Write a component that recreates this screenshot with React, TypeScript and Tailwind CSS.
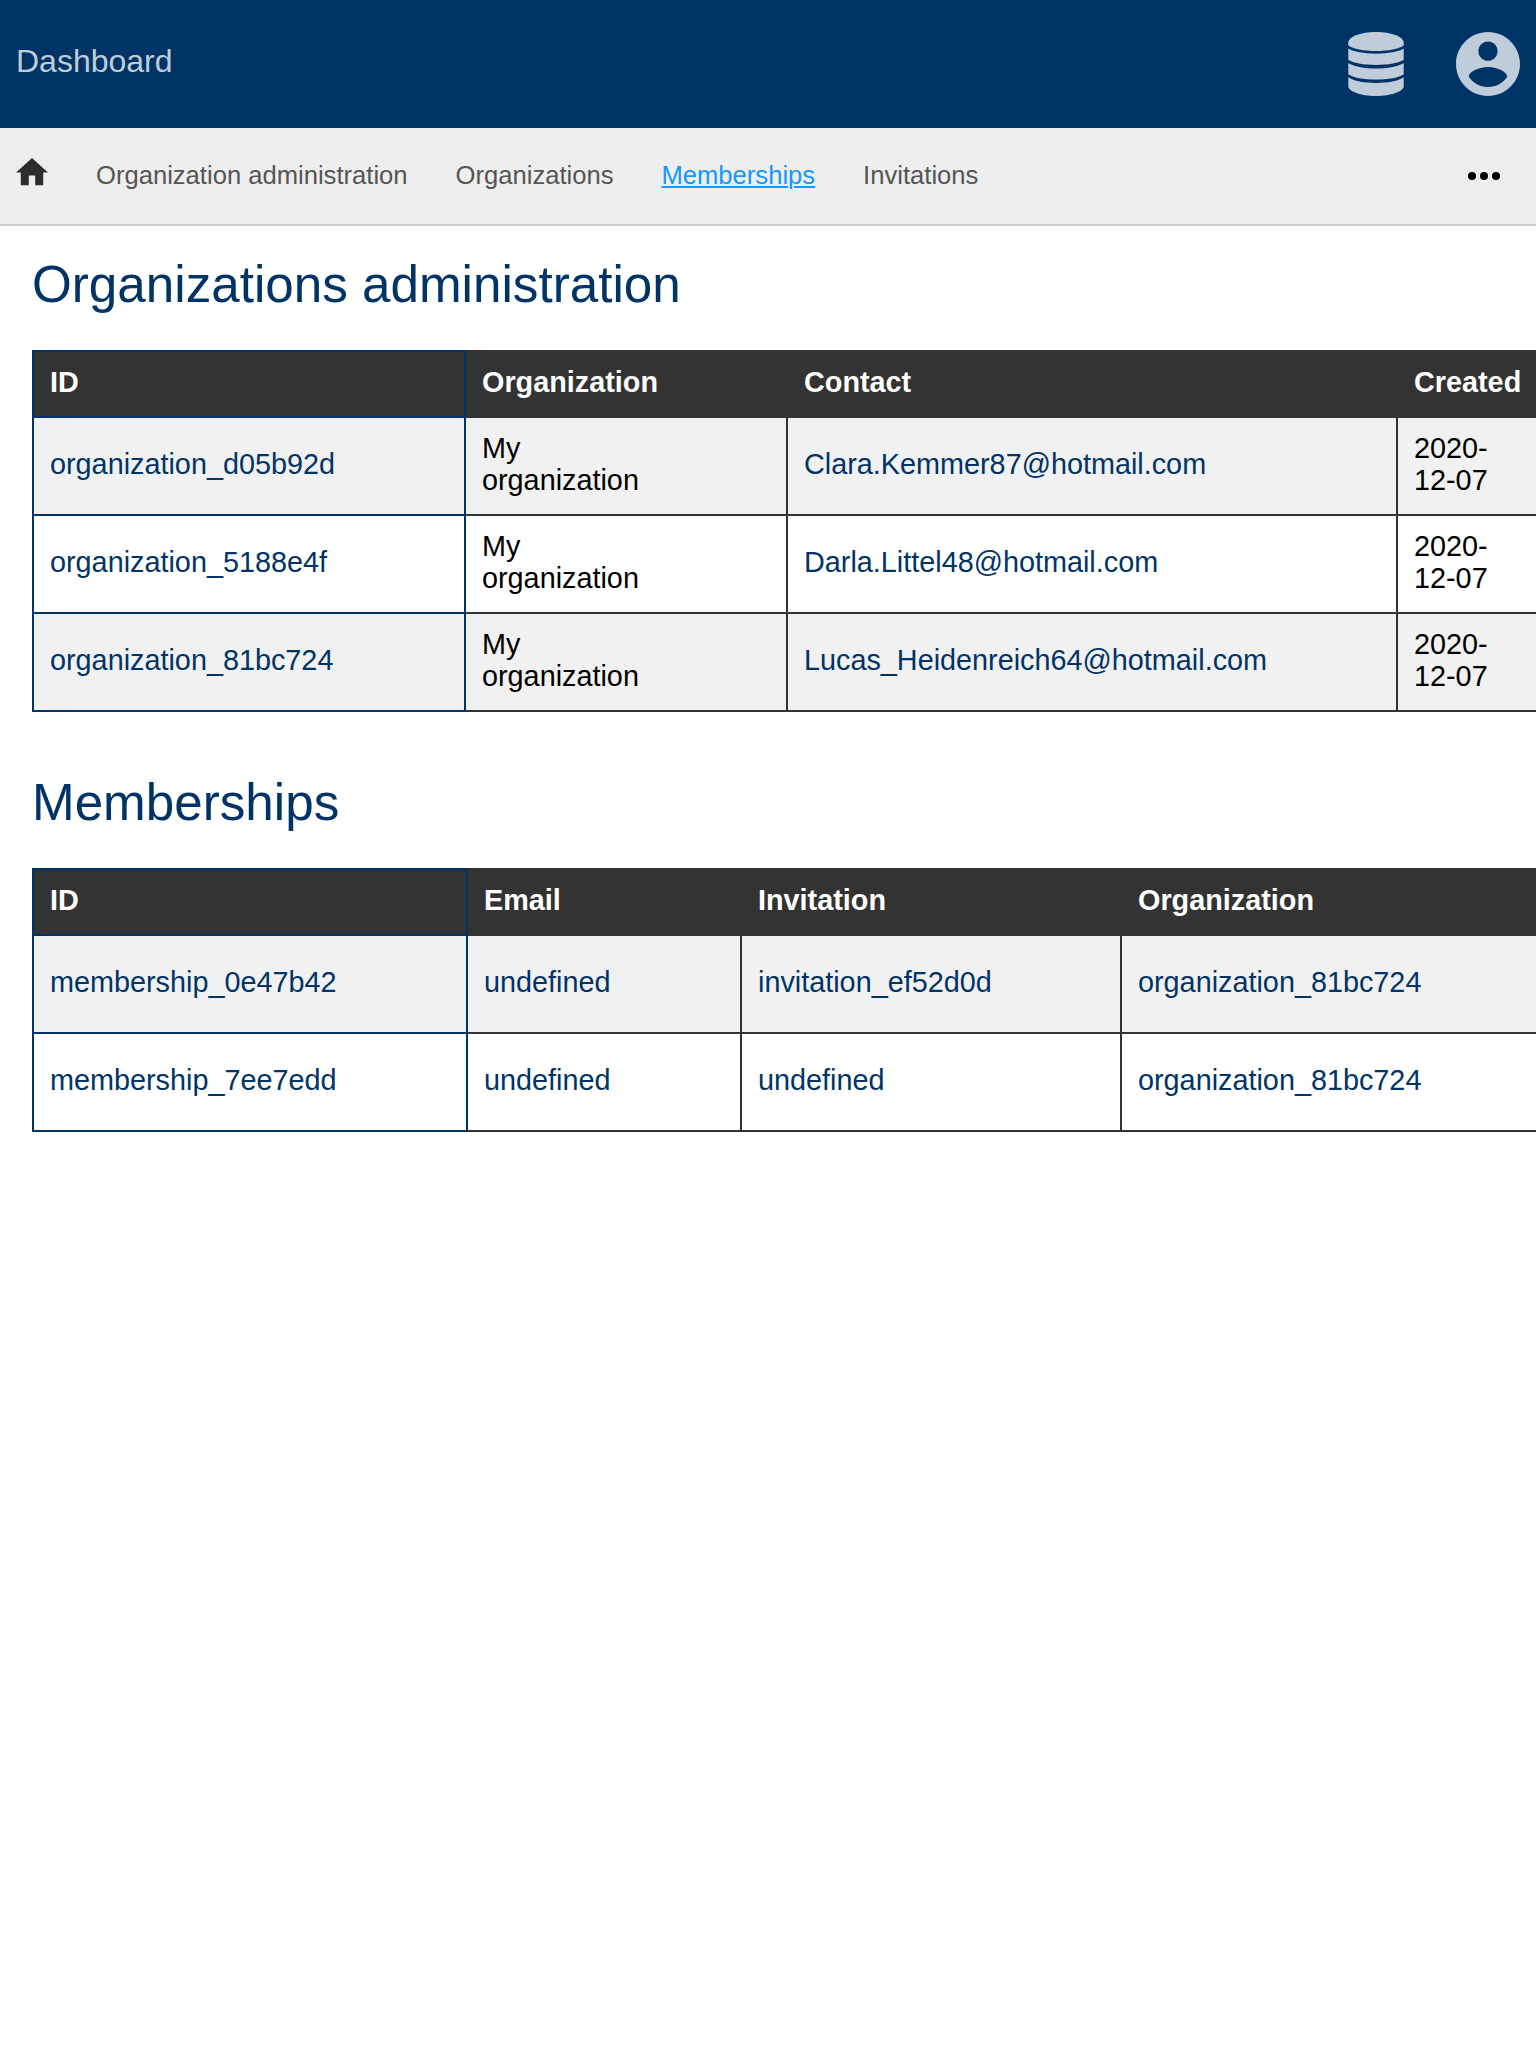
import type { ReactNode } from "react";

type Column = { label: string; width: string };
type Cell = { text: ReactNode; link?: boolean };

const organizationColumns: Column[] = [
  { label: "ID", width: "w-[432px]" },
  { label: "Organization", width: "w-[322px]" },
  { label: "Contact", width: "w-[610px]" },
  { label: "Created", width: "w-[180px]" },
];

const myOrganization = (
  <>
    My
    <br />
    organization
  </>
);
const created = (
  <>
    2020-
    <br />
    12-07
  </>
);

const organizationRows: Cell[][] = [
  ["organization_d05b92d", "Clara.Kemmer87@hotmail.com"],
  ["organization_5188e4f", "Darla.Littel48@hotmail.com"],
  ["organization_81bc724", "Lucas_Heidenreich64@hotmail.com"],
].map(([id, contact]) => [
  { text: id, link: true },
  { text: myOrganization },
  { text: contact, link: true },
  { text: created },
]);

const membershipColumns: Column[] = [
  { label: "ID", width: "w-[434px]" },
  { label: "Email", width: "w-[274px]" },
  { label: "Invitation", width: "w-[380px]" },
  { label: "Organization", width: "w-[460px]" },
];

const membershipRows: Cell[][] = [
  ["membership_0e47b42", "undefined", "invitation_ef52d0d", "organization_81bc724"],
  ["membership_7ee7edd", "undefined", "undefined", "organization_81bc724"],
].map((row) => row.map((text) => ({ text, link: true })));

function DatabaseIcon() {
  return (
    <svg viewBox="0 0 56 64" className="h-16 w-14" fill="currentColor">
      <path d="M28 0C43.200 0 55.700 4.700 55.700 10.600V13.400C51 16.700 40.500 18.900 28 18.900S5 16.700 .3 13.400V10.600C.3 4.700 12.800 0 28 0Z" />
      <path d="M.3 16.600C5.500 19.800 16 21.700 28 21.700S50.500 19.800 55.700 16.600V27.700C51 30.900 40.500 32.900 28 32.900S5 30.900 .3 27.700Z" />
      <path d="M.3 31C5.500 34.500 16 36.500 28 36.500S50.500 34.500 55.700 31V42.200C51 45.500 40.500 47.500 28 47.500S5 45.500 .3 42.200Z" />
      <path d="M.3 45.300C5.500 49 16 51 28 51S50.500 49 55.700 45.300V54C55.700 59.500 43.200 64 28 64S.3 59.500 .3 54Z" />
    </svg>
  );
}

function AccountIcon() {
  return (
    <svg viewBox="2 2 20 20" className="size-16" fill="currentColor">
      <path d="M12 2C6.480 2 2 6.480 2 12s4.480 10 10 10 10-4.480 10-10S17.520 2 12 2zm0 3c1.660 0 3 1.340 3 3s-1.340 3-3 3-3-1.340-3-3 1.340-3 3-3zm0 14.200c-2.500 0-4.710-1.280-6-3.220.030-1.990 4-3.080 6-3.080 1.990 0 5.970 1.090 6 3.080-1.290 1.940-3.500 3.220-6 3.220z" />
    </svg>
  );
}

function HomeIcon() {
  return (
    <svg viewBox="2 3 20 17" className="mb-2 h-[27.2px] w-8 text-[#2d2d2d]" fill="currentColor">
      <path d="M10 20v-6h4v6h5v-8h3L12 3 2 12h3v8z" />
    </svg>
  );
}

function DataTable({ columns, rows }: { columns: Column[]; rows: Cell[][] }) {
  return (
    <table className="w-max table-fixed border-collapse text-[28.8px] leading-8">
      <thead>
        <tr className="h-[66px] bg-[#333333] text-left text-white">
          {columns.map((column) => (
            <th
              key={column.label}
              className={`${column.width} border-2 border-[#333333] px-4 pt-0 pb-1 font-bold first:border-[#003366]`}
            >
              {column.label}
            </th>
          ))}
        </tr>
      </thead>
      <tbody>
        {rows.map((row, r) => (
          <tr key={r} className="h-[98px] odd:bg-[#f1f1f1]">
            {row.map((cell, c) => (
              <td
                key={c}
                className={`border-2 border-[#333333] px-4 pt-0 pb-1 first:border-[#003366] ${cell.link ? "text-[#003366]" : "text-black"}`}
              >
                {cell.text}
              </td>
            ))}
          </tr>
        ))}
      </tbody>
    </table>
  );
}

function SectionTitle({ children }: { children: ReactNode }) {
  return <h1 className="pt-[30px] pb-[37px] text-[51.2px] leading-[57px] text-[#003366]">{children}</h1>;
}

export default function App() {
  return (
    <div className="min-h-[2048px] w-full overflow-hidden bg-white font-['Liberation_Sans',Arial,sans-serif]">
      <header className="flex h-32 items-center justify-between bg-[#003366] px-4 text-[#bfccd9]">
        <span className="pb-1.5 text-[32px] leading-9">Dashboard</span>
        <div className="flex items-center gap-[52px]">
          <DatabaseIcon />
          <AccountIcon />
        </div>
      </header>

      <nav className="flex h-[98px] items-center gap-12 border-b-2 border-[#cccccc] bg-[#eeeeee] px-4 text-[25.6px] leading-8 text-[#555555]">
        <HomeIcon />
        <a className="pb-0.5">Organization administration</a>
        <a className="pb-0.5">Organizations</a>
        <a className="pb-0.5 text-[#1199ff] underline decoration-2 underline-offset-2">Memberships</a>
        <a className="pb-0.5">Invitations</a>
        <div className="mr-5 ml-auto flex gap-1">
          <span className="size-2 rounded-full bg-black" />
          <span className="size-2 rounded-full bg-black" />
          <span className="size-2 rounded-full bg-black" />
        </div>
      </nav>

      <main className="pl-8">
        <section>
          <SectionTitle>Organizations administration</SectionTitle>
          <DataTable columns={organizationColumns} rows={organizationRows} />
        </section>
        <section className="pt-8">
          <SectionTitle>Memberships</SectionTitle>
          <DataTable columns={membershipColumns} rows={membershipRows} />
        </section>
      </main>
    </div>
  );
}
